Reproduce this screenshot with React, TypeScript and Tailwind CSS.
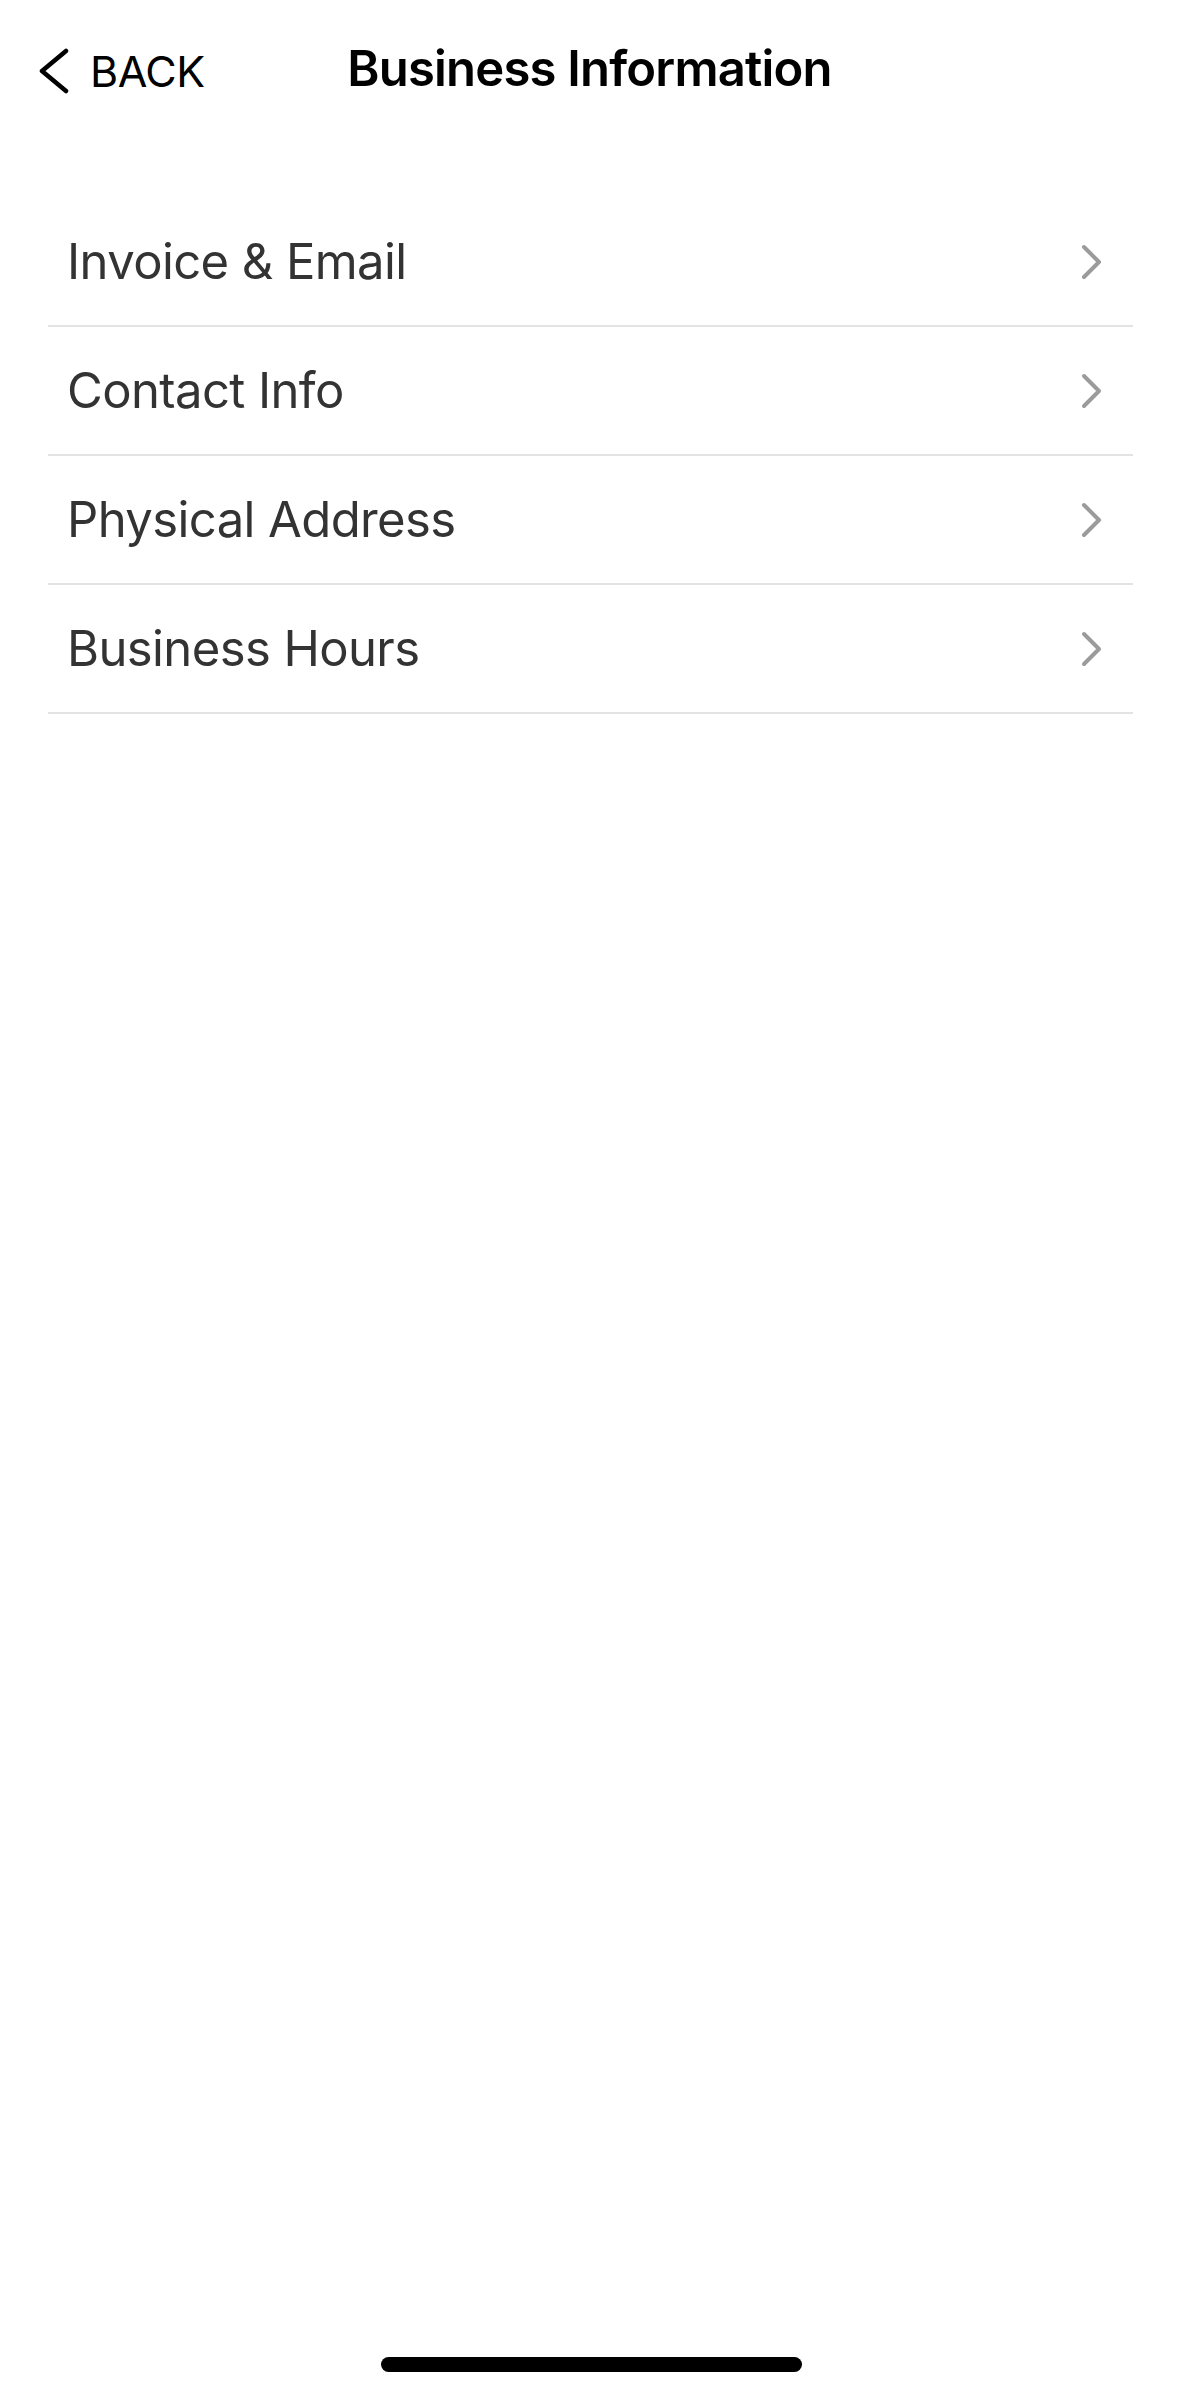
const items = ['Invoice & Email', 'Contact Info', 'Physical Address', 'Business Hours'];

function Chevron() {
  return (
    <svg width="26" height="38" viewBox="0 0 26 38" fill="none">
      <path d="M5 4 L20 19 L5 34" stroke="#9b9b9b" strokeWidth="4" strokeLinecap="round" strokeLinejoin="round" />
    </svg>
  );
}

export default function App() {
  return (
    <div
      className="relative w-[1179px] h-[2396px] bg-white overflow-hidden"
      style={{ fontFamily: 'Inter, "Noto Sans", sans-serif' }}
    >
      {/* Header */}
      <div className="relative h-[136px] flex items-center justify-center">
        <button className="absolute left-[36px] top-[48px] flex items-center gap-[20px] text-black">
          <svg width="34" height="46" viewBox="0 0 34 46" fill="none">
            <path d="M30 3 L6 23 L30 43" stroke="#000" strokeWidth="4.5" strokeLinecap="round" strokeLinejoin="round" />
          </svg>
          <span className="text-[43px] leading-none font-normal tracking-[-0.5px]">BACK</span>
        </button>
        <h1 className="text-[49px] leading-none font-semibold text-black tracking-[-0.8px]">
          Business Information
        </h1>
      </div>

      {/* List */}
      <div className="mt-[62px] mx-[48px] w-[1085px]">
        {items.map((label) => (
          <div
            key={label}
            className="h-[129px] box-border border-b-2 border-[#e3e3e3] flex items-center justify-between pl-[19px] pr-[28px]"
          >
            <span className="text-[49px] leading-none text-[#333333] tracking-[-0.6px]">{label}</span>
            <Chevron />
          </div>
        ))}
      </div>

      {/* Home indicator */}
      <div className="absolute left-[381px] top-[2357px] w-[421px] h-[15px] rounded-full bg-black" />
    </div>
  );
}
